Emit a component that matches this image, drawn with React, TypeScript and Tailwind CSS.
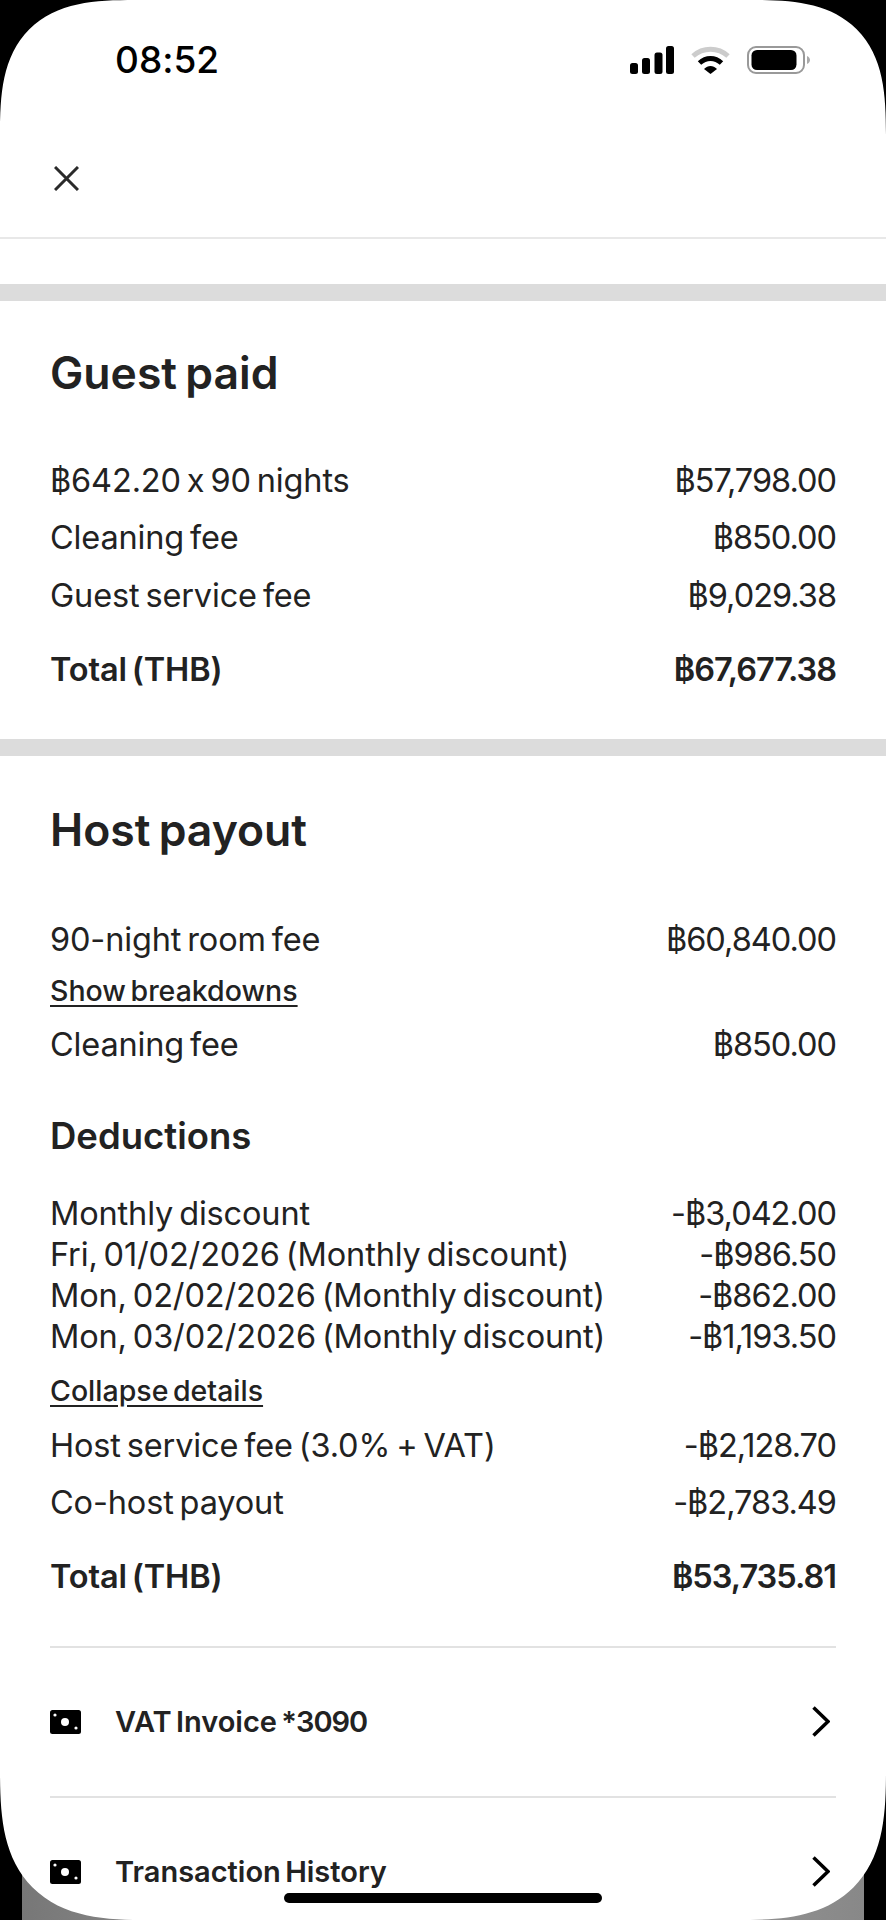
function Row({ label, value, bold }: { label: string; value: string; bold?: boolean }) {
  return (
    <div className={`flex h-[57.5px] items-center justify-between pt-[2.5px] ${bold ? "font-semibold" : ""}`}>
      <span className="tracking-[-0.15px]">{label}</span>
      <span className="tracking-[-1px]">{value}</span>
    </div>
  );
}

function StatusIcons() {
  return (
    <div className="flex items-center gap-[17px]">
      <svg width="44" height="28" viewBox="0 0 44 28" fill="#000">
        <rect x="0" y="17" width="8" height="11" rx="2.5" />
        <rect x="12" y="12" width="8" height="16" rx="2.5" />
        <rect x="24.5" y="6.5" width="8" height="21.5" rx="2.5" />
        <rect x="36" y="0" width="8" height="28" rx="2.5" />
      </svg>
      <svg width="39" height="28" viewBox="0 0 39 28" fill="none">
        <path d="M2 10 C12 1 27 1 37 10" stroke="#cccccc" strokeWidth="5" />
        <path d="M8.5 17 C15 11 24 11 30.5 17" stroke="#000" strokeWidth="5" />
        <path d="M13 23 L19.5 28 L26 23 C22 19 17 19 13 23 Z" fill="#000" />
      </svg>
      <svg width="63" height="28" viewBox="0 0 63 28" fill="none">
        <rect x="1" y="1" width="56" height="26" rx="8" stroke="#999999" strokeWidth="2" />
        <rect x="4.5" y="4" width="45" height="20" rx="5.5" fill="#000" />
        <path d="M60 10 C62 11 63 12.5 63 14 C63 15.5 62 17 60 18 Z" fill="#aaaaaa" />
      </svg>
    </div>
  );
}

function CloseIcon() {
  return (
    <svg width="25" height="25" viewBox="0 0 25 25" fill="none" stroke="#2a2a2a" strokeWidth="3">
      <path d="M1 1 L24 24 M24 1 L1 24" />
    </svg>
  );
}

function MoneyIcon() {
  return (
    <svg width="31" height="24" viewBox="0 0 31 24">
      <rect width="31" height="24" rx="2.5" fill="#000" />
      <circle cx="15" cy="12" r="4" fill="#fff" />
      <circle cx="5" cy="5" r="1.6" fill="#fff" />
      <circle cx="26" cy="18" r="1.6" fill="#fff" />
    </svg>
  );
}

function LinkRow({ children }: { children: React.ReactNode }) {
  return (
    <div className="flex h-[148px] shrink-0 items-center">
      <MoneyIcon />
      <span className="ml-[34px] text-[29px] font-semibold">{children}</span>
      <svg className="mr-[6px] ml-auto" width="18" height="31" viewBox="0 0 18 31" fill="none" stroke="#000" strokeWidth="3.5">
        <path d="M1.5 1.5 L16 15.5 L1.5 29.5" />
      </svg>
    </div>
  );
}

export default function App() {
  return (
    <div className="relative h-[1920px] w-[886px] overflow-hidden bg-black font-['Inter','Noto_Sans',sans-serif] text-[32.5px] text-[#222222] [font-feature-settings:'calt'_0] [word-spacing:-3px]">
      <div className="absolute right-[22px] bottom-0 left-[22px] h-[46px] bg-gradient-to-r from-[#777777] via-[#aaaaaa] to-[#888888]" />
      <div className="relative flex h-full flex-col overflow-hidden rounded-t-[135px] rounded-b-[150px] bg-white [corner-shape:superellipse(1.5)]">
        <div className="flex h-[120px] shrink-0 items-center justify-between pr-[76px] pl-[115px]">
          <span className="text-[37px] font-medium text-black">08:52</span>
          <StatusIcons />
        </div>
        <div className="flex h-[119px] shrink-0 items-center border-b-2 border-[#e8e8e8] pl-[54px]">
          <CloseIcon />
        </div>
        <div className="mt-[45px] h-[17px] shrink-0 bg-[#dcdcdc]" />

        <section className="shrink-0 px-[50px] pt-[42px] pb-[41px]">
          <h2 className="flex h-[60px] items-center text-[44.5px] font-semibold">Guest paid</h2>
          <div className="mt-[48px]">
            <Row label="฿642.20 x 90 nights" value="฿57,798.00" />
            <Row label="Cleaning fee" value="฿850.00" />
            <Row label="Guest service fee" value="฿9,029.38" />
          </div>
          <div className="mt-[17px]">
            <Row label="Total (THB)" value="฿67,677.38" bold />
          </div>
        </section>

        <div className="h-[17px] shrink-0 bg-[#dcdcdc]" />

        <section className="px-[50px] pt-[44px]">
          <h2 className="flex h-[60px] items-center text-[44.5px] font-semibold">Host payout</h2>
          <div className="mt-[50px]">
            <Row label="90-night room fee" value="฿60,840.00" />
          </div>
          <a className="flex h-[48px] items-center text-[28.5px] font-medium underline underline-offset-4">Show breakdowns</a>
          <Row label="Cleaning fee" value="฿850.00" />
          <h3 className="mt-[33px] flex h-[60px] items-center text-[36.5px] font-semibold">Deductions</h3>
          <div className="mt-[27px] [&>div]:h-[41px]">
            <Row label="Monthly discount" value="-฿3,042.00" />
            <Row label="Fri, 01/02/2026 (Monthly discount)" value="-฿986.50" />
            <Row label="Mon, 02/02/2026 (Monthly discount)" value="-฿862.00" />
            <Row label="Mon, 03/02/2026 (Monthly discount)" value="-฿1,193.50" />
          </div>
          <a className="mt-[9px] flex h-[50px] items-center text-[28.5px] font-medium underline underline-offset-4">Collapse details</a>
          <Row label="Host service fee (3.0% + VAT)" value="-฿2,128.70" />
          <Row label="Co-host payout" value="-฿2,783.49" />
          <div className="mt-[16px]">
            <Row label="Total (THB)" value="฿53,735.81" bold />
          </div>
          <div className="mt-[41px] border-t-2 border-[#e2e2e2]">
            <LinkRow>
              VAT Invoice <span className="tracking-[-1px]">*3090</span>
            </LinkRow>
          </div>
          <div className="border-t-2 border-[#e2e2e2]">
            <LinkRow>Transaction History</LinkRow>
          </div>
        </section>

        <div className="absolute bottom-[17px] left-[284px] h-[10px] w-[318px] rounded-full bg-black" />
      </div>
    </div>
  );
}
